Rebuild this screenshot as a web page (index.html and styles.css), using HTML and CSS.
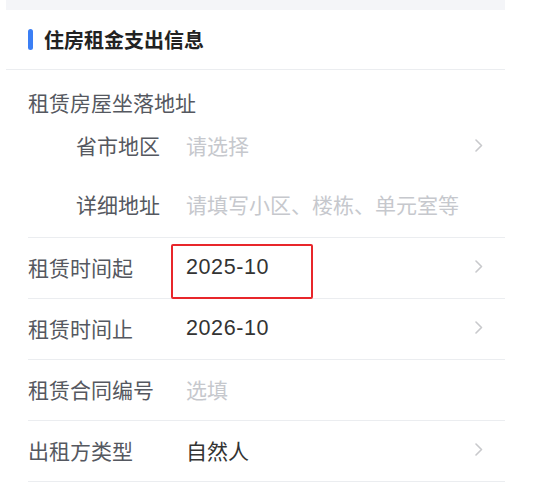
FILE: index.html
```html
<!DOCTYPE html>
<html lang="zh-CN">
<head>
<meta charset="utf-8">
<link rel="stylesheet" href="styles.css">
</head>
<body>
<div class="page">
  <div class="topbar"></div>
  <div class="card">
    <div class="card-header">
      <span class="accent"></span>
      <span class="card-title">住房租金支出信息</span>
    </div>
    <div class="list">
      <div class="group">
        <div class="group-title">租赁房屋坐落地址</div>
        <div class="row sub">
          <div class="label sub-label">省市地区</div>
          <div class="value placeholder">请选择</div>
          <svg class="chev" viewBox="0 0 8 13" width="8" height="13"><path d="M1 1 L6.5 6.5 L1 12" fill="none" stroke="#c8c9cc" stroke-width="1.6" stroke-linecap="round" stroke-linejoin="round"/></svg>
        </div>
        <div class="row sub last-sub">
          <div class="label sub-label">详细地址</div>
          <div class="value placeholder">请填写小区、楼栋、单元室等</div>
        </div>
      </div>
      <div class="row">
        <div class="label">租赁时间起</div>
        <div class="value num highlighted">2025-10<span class="mark"></span></div>
        <svg class="chev" viewBox="0 0 8 13" width="8" height="13"><path d="M1 1 L6.5 6.5 L1 12" fill="none" stroke="#c8c9cc" stroke-width="1.6" stroke-linecap="round" stroke-linejoin="round"/></svg>
      </div>
      <div class="row">
        <div class="label">租赁时间止</div>
        <div class="value num">2026-10</div>
        <svg class="chev" viewBox="0 0 8 13" width="8" height="13"><path d="M1 1 L6.5 6.5 L1 12" fill="none" stroke="#c8c9cc" stroke-width="1.6" stroke-linecap="round" stroke-linejoin="round"/></svg>
      </div>
      <div class="row">
        <div class="label">租赁合同编号</div>
        <div class="value placeholder">选填</div>
      </div>
      <div class="row">
        <div class="label">出租方类型</div>
        <div class="value">自然人</div>
        <svg class="chev" viewBox="0 0 8 13" width="8" height="13"><path d="M1 1 L6.5 6.5 L1 12" fill="none" stroke="#c8c9cc" stroke-width="1.6" stroke-linecap="round" stroke-linejoin="round"/></svg>
      </div>
    </div>
  </div>
</div>
</body>
</html>
```
FILE: styles.css
```css
html, body {
  margin: 0;
  padding: 0;
  background: #ffffff;
}
body {
  font-family: "Noto Sans CJK SC", "Noto Sans", sans-serif;
  color: #333;
}
.page {
  width: 499px;
  margin-left: 6px;
}
.topbar {
  height: 10px;
  background: #f4f5f8;
}
.card-header {
  box-sizing: border-box;
  height: 60px;
  display: flex;
  align-items: center;
  padding-left: 22px;
  gap: 11px;
  border-bottom: 1px solid #ebedf0;
}
.accent {
  width: 5px;
  height: 21px;
  border-radius: 3px;
  background: #3b7ff5;
}
.card-title {
  font-size: 20px;
  font-weight: 700;
  color: #222;
  line-height: 28px;
}
.list {
  padding-left: 22px;
}
.group {
  border-bottom: 1px solid #ebedf0;
}
.group-title {
  font-size: 21px;
  line-height: 30px;
  color: #555860;
  padding-top: 17px;
  padding-bottom: 2px;
}
.row {
  box-sizing: border-box;
  display: flex;
  align-items: center;
  height: 61px;
  padding-bottom: 3px;
  border-bottom: 1px solid #ebedf0;
  padding-right: 22px;
}
.row.sub {
  border-bottom: none;
  height: 55px;
}
.row.sub.last-sub {
  height: 63px;
}
.label {
  width: 158px;
  flex: none;
  font-size: 21px;
  color: #555860;
  line-height: 30px;
}
.sub-label {
  width: 110px;
  padding-left: 48px;
}
.value {
  flex: 1;
  font-size: 21px;
  line-height: 30px;
  color: #333;
}
.value.num {
  font-family: "Liberation Sans", "Noto Sans CJK SC", sans-serif;
  letter-spacing: 0.6px;
  font-size: 21.5px;
}
.placeholder {
  color: #c6c8cd;
}
.chev {
  flex: none;
  display: block;
}
.highlighted {
  position: relative;
}
.mark {
  position: absolute;
  left: -15px;
  top: -8px;
  width: 138px;
  height: 51px;
  border: 2px solid #e8262b;
  border-radius: 2px;
}
```
